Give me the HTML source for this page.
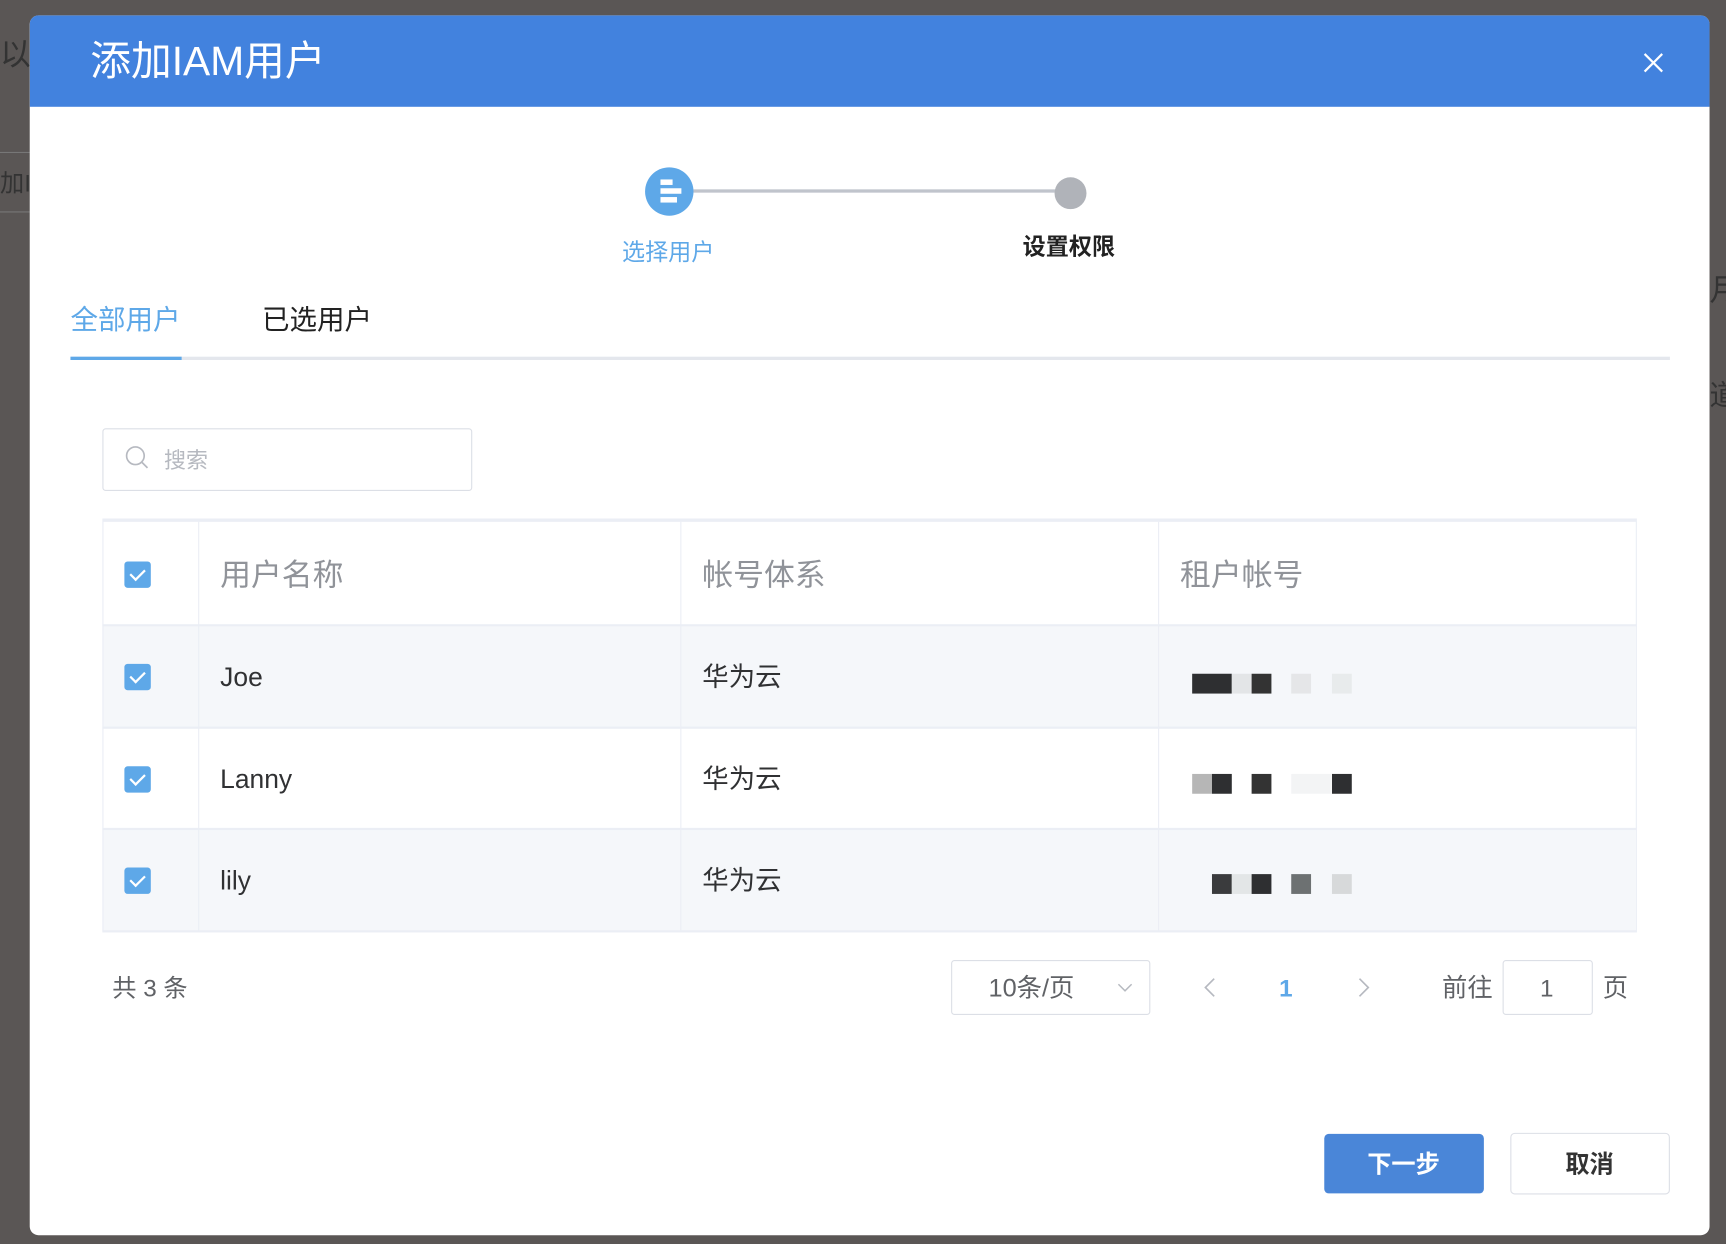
<!DOCTYPE html>
<html><head><meta charset="utf-8"><style>
*{margin:0;padding:0;box-sizing:border-box}
html,body{width:1726px;height:1244px;overflow:hidden;background:#5a5655;font-family:"Liberation Sans","Noto Sans CJK SC",sans-serif}
#w{position:absolute;left:0;top:0;width:1568px;height:1130px;transform:scale(1.1008,1.1009);transform-origin:0 0}
.a{position:absolute}
.modal{left:27px;top:14px;width:1526px;height:1108px;background:#fff;border-radius:8px;overflow:hidden}
.hd{left:0;top:0;width:1526px;height:83px;background:#4282de}
.t{white-space:nowrap;line-height:1}
.cb{width:24px;height:24px;background:#5ea8e8;border-radius:3px}
.cb:after{content:"";position:absolute;left:8px;top:4px;width:6px;height:11px;border:solid #fff;border-width:0 2px 2px 0;transform:rotate(45deg)}
.vl{width:1px;background:#ebeef5}
.hl{height:2px;background:#ebeef5}
.bk{height:18px}
</style></head><body><div id="w">
<div class="a t" style="left:0;top:36px;font-size:28px;color:#333">以</div>
<div class="a t" style="left:0;top:156px;font-size:22px;color:#333">加IA</div>
<div class="a" style="left:0;top:138px;width:27px;height:1px;background:#777"></div>
<div class="a" style="left:0;top:192px;width:27px;height:1px;background:#777"></div>
<div class="a t" style="left:1553px;top:250px;font-size:28px;color:#333">月</div>
<div class="a t" style="left:1553px;top:346px;font-size:26px;color:#333">道</div>
<div class="a modal">
 <div class="a hd"></div>
 <div class="a t" style="left:55px;top:23px;font-size:37px;color:#fff">添加IAM用户</div>
 <svg class="a" style="left:1466px;top:34px" width="18" height="18"><path d="M1 1L17 17M17 1L1 17" stroke="#fff" stroke-width="2"/></svg>
</div>
<!-- stepper -->
<div class="a" style="left:630px;top:172px;width:330px;height:3px;background:#c0c4cc"></div>
<div class="a" style="left:586px;top:152px;width:44px;height:44px;border-radius:50%;background:#5ea8e8"></div>
<div class="a" style="left:600px;top:163px;width:11px;height:5px;background:#fff"></div>
<div class="a" style="left:600px;top:171px;width:19px;height:5px;background:#fff"></div>
<div class="a" style="left:600px;top:179px;width:15px;height:5px;background:#fff"></div>
<div class="a" style="left:958px;top:161px;width:29px;height:29px;border-radius:50%;background:#b0b3b9"></div>
<div class="a t" style="left:565px;top:219px;font-size:21px;color:#5ea8e8">选择用户</div>
<div class="a t" style="left:929px;top:214px;font-size:21px;color:#222;font-weight:bold">设置权限</div>
<!-- tabs -->
<div class="a t" style="left:64px;top:279px;font-size:25px;color:#5ea8e8">全部用户</div>
<div class="a t" style="left:238px;top:279px;font-size:25px;color:#222">已选用户</div>
<div class="a" style="left:64px;top:324px;width:1453px;height:3px;background:#e4e7ed"></div>
<div class="a" style="left:64px;top:324px;width:101px;height:3px;background:#5ea8e8"></div>
<!-- search -->
<div class="a" style="left:93px;top:389px;width:336px;height:57px;border:1px solid #dcdfe6;border-radius:3px"></div>
<svg class="a" style="left:114px;top:405px" width="22" height="22"><circle cx="9" cy="9" r="8" fill="none" stroke="#b6b9c0" stroke-width="1.5"/><path d="M15 15L20 20" stroke="#b6b9c0" stroke-width="1.5"/></svg>
<div class="a t" style="left:149px;top:409px;font-size:20px;color:#b6b9c0">搜索</div>
<!-- table -->
<div class="a" style="left:93px;top:471px;width:1394px;height:375px;border:1px solid #ebeef5;border-top:3px solid #ebeef5"></div>
<div class="a" style="left:94px;top:569px;width:1392px;height:92px;background:#f5f7fa"></div>
<div class="a" style="left:94px;top:754px;width:1392px;height:91px;background:#f5f7fa"></div>
<div class="a hl" style="left:93px;top:567px;width:1394px"></div>
<div class="a hl" style="left:93px;top:660px;width:1394px"></div>
<div class="a hl" style="left:93px;top:752px;width:1394px"></div>
<div class="a hl" style="left:93px;top:845px;width:1394px"></div>
<div class="a vl" style="left:180px;top:474px;height:372px"></div>
<div class="a vl" style="left:618px;top:474px;height:372px"></div>
<div class="a vl" style="left:1052px;top:474px;height:372px"></div>
<div class="a cb" style="left:113px;top:510px"></div>
<div class="a cb" style="left:113px;top:603px"></div>
<div class="a cb" style="left:113px;top:696px"></div>
<div class="a cb" style="left:113px;top:788px"></div>
<div class="a t" style="left:200px;top:509px;font-size:28px;color:#909399">用户名称</div>
<div class="a t" style="left:638px;top:509px;font-size:28px;color:#909399">帐号体系</div>
<div class="a t" style="left:1072px;top:509px;font-size:28px;color:#909399">租户帐号</div>
<div class="a t" style="left:200px;top:604px;font-size:24px;color:#303133">Joe</div>
<div class="a t" style="left:200px;top:697px;font-size:24px;color:#303133">Lanny</div>
<div class="a t" style="left:200px;top:789px;font-size:24px;color:#303133">lily</div>
<div class="a t" style="left:638px;top:604px;font-size:24px;color:#303133">华为云</div>
<div class="a t" style="left:638px;top:697px;font-size:24px;color:#303133">华为云</div>
<div class="a t" style="left:638px;top:789px;font-size:24px;color:#303133">华为云</div>
<div class="a bk" style="left:1083px;top:612px;width:36px;background:#2e2f31"></div>
<div class="a bk" style="left:1119px;top:612px;width:18px;background:#e3e5e7"></div>
<div class="a bk" style="left:1137px;top:612px;width:18px;background:#333"></div>
<div class="a bk" style="left:1173px;top:612px;width:18px;background:#e5e6e8"></div>
<div class="a bk" style="left:1210px;top:612px;width:18px;background:#e8ebec"></div>
<div class="a bk" style="left:1083px;top:703px;width:18px;background:#b6b6b6"></div>
<div class="a bk" style="left:1101px;top:703px;width:18px;background:#2e2f31"></div>
<div class="a bk" style="left:1137px;top:703px;width:18px;background:#333"></div>
<div class="a bk" style="left:1173px;top:703px;width:36px;background:#f3f4f5"></div>
<div class="a bk" style="left:1210px;top:703px;width:18px;background:#2e2f31"></div>
<div class="a bk" style="left:1101px;top:794px;width:18px;background:#3a3b3d"></div>
<div class="a bk" style="left:1119px;top:794px;width:18px;background:#e3e6e7"></div>
<div class="a bk" style="left:1137px;top:794px;width:18px;background:#2e2f31"></div>
<div class="a bk" style="left:1173px;top:794px;width:18px;background:#6d7172"></div>
<div class="a bk" style="left:1210px;top:794px;width:18px;background:#d7d9da"></div>
<!-- pagination -->
<div class="a t" style="left:102px;top:887px;font-size:22px;color:#606266">共 3 条</div>
<div class="a" style="left:864px;top:872px;width:181px;height:50px;border:1px solid #dcdfe6;border-radius:3px"></div>
<div class="a t" style="left:898px;top:886px;font-size:23px;color:#606266">10条/页</div>
<svg class="a" style="left:1015px;top:892px" width="14" height="10"><path d="M1 2L7 8L13 2" fill="none" stroke="#b6b9c0" stroke-width="1.3"/></svg>
<svg class="a" style="left:1093px;top:888px" width="12" height="18"><path d="M10 1L2 9L10 17" fill="none" stroke="#b6b9c0" stroke-width="1.5"/></svg>
<div class="a t" style="left:1162px;top:887px;font-size:22px;color:#5ea8e8;font-weight:bold">1</div>
<svg class="a" style="left:1233px;top:888px" width="12" height="18"><path d="M2 1L10 9L2 17" fill="none" stroke="#b6b9c0" stroke-width="1.5"/></svg>
<div class="a t" style="left:1310px;top:886px;font-size:23px;color:#606266">前往</div>
<div class="a" style="left:1365px;top:872px;width:82px;height:50px;border:1px solid #dcdfe6;border-radius:3px"></div>
<div class="a t" style="left:1399px;top:887px;font-size:22px;color:#606266">1</div>
<div class="a t" style="left:1456px;top:886px;font-size:23px;color:#606266">页</div>
<!-- buttons -->
<div class="a" style="left:1203px;top:1030px;width:145px;height:54px;background:#4a86d8;border-radius:4px"></div>
<div class="a t" style="left:1242px;top:1047px;font-size:22px;color:#fff;font-weight:bold">下一步</div>
<div class="a" style="left:1372px;top:1029px;width:145px;height:56px;border:1px solid #dcdfe6;border-radius:4px"></div>
<div class="a t" style="left:1422px;top:1047px;font-size:22px;color:#333;font-weight:bold">取消</div>
</div></body></html>
